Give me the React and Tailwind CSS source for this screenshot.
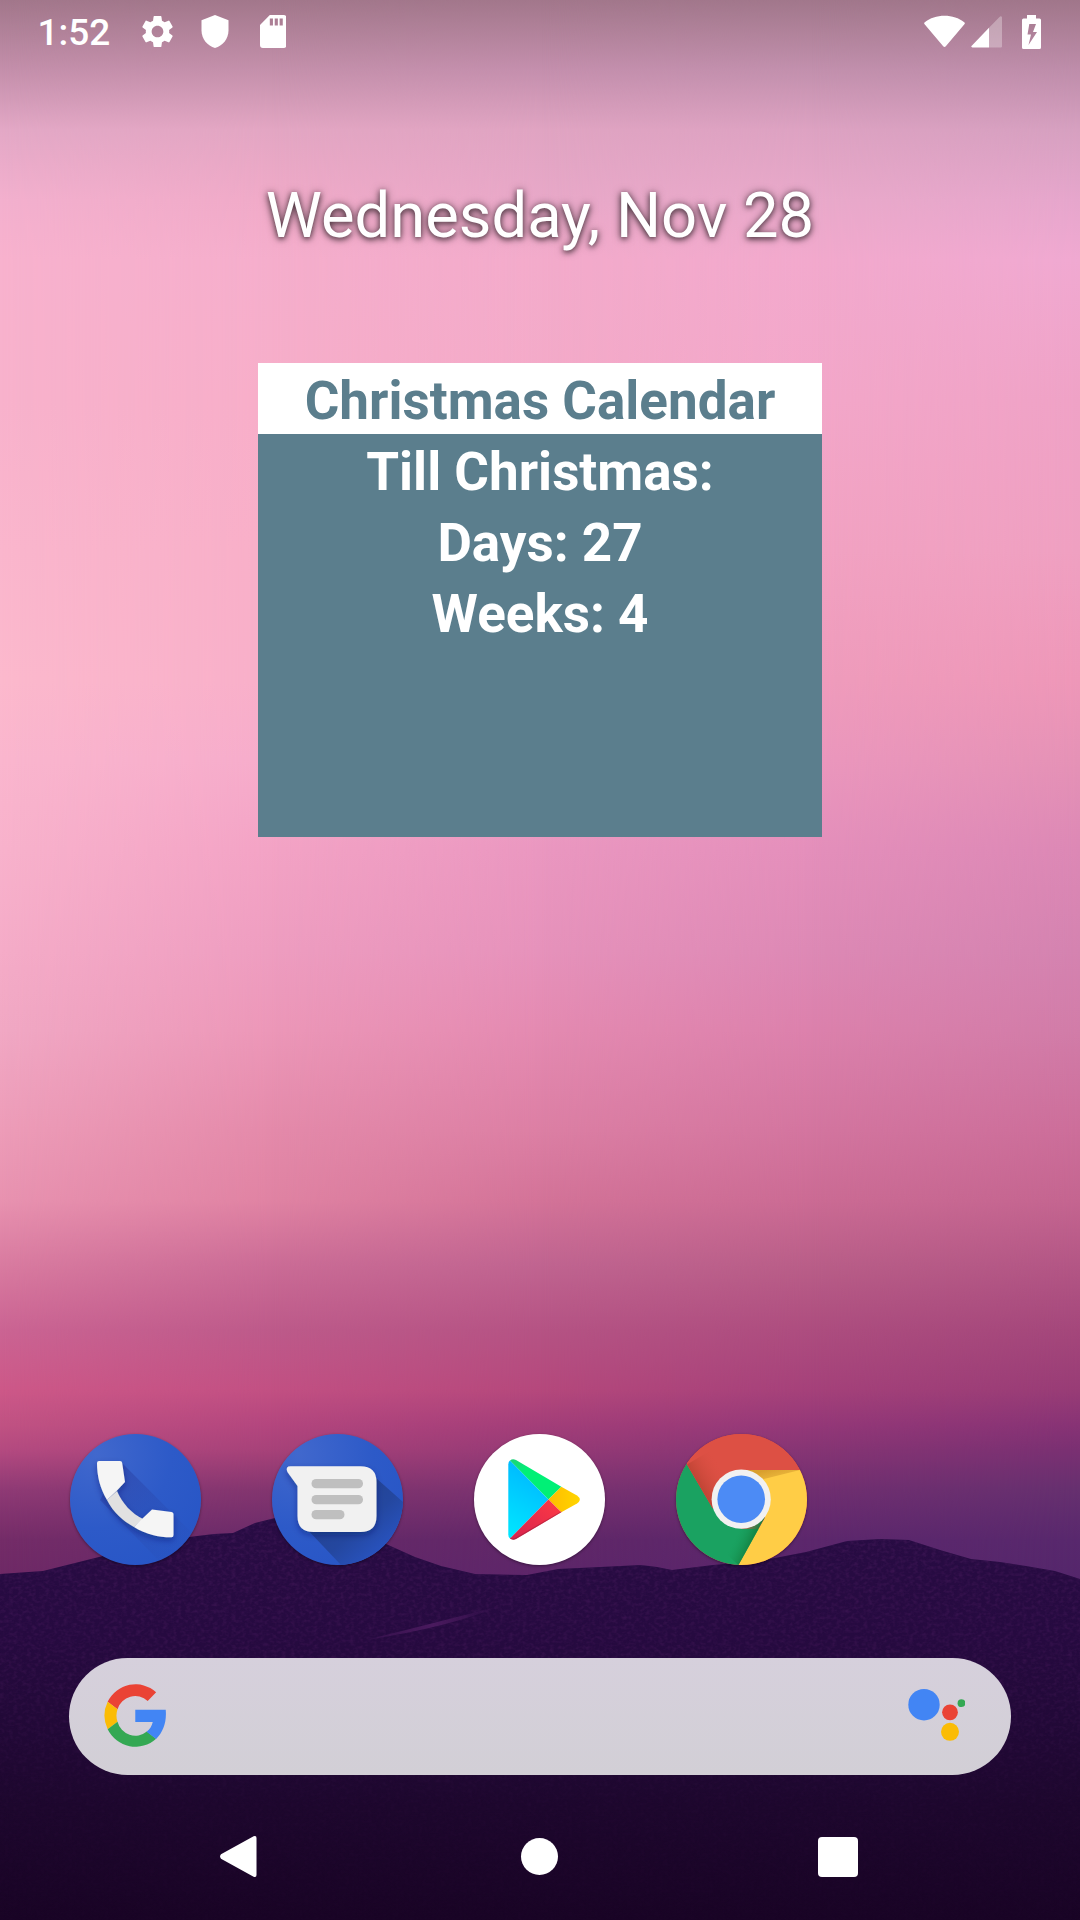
import React from "react";

// Sky colours sampled on a grid: each row is [y, colour at x = 0, 270, 540, 810, 1080].
const SKY = [
  [0, "#a2778b", "#a2778b", "#a2778b", "#a1778b", "#a0768a"],
  [70, "#c48fab", "#c490ab", "#c48fad", "#c290ad", "#be8daa"],
  [130, "#e3a8c6", "#e3a6c3", "#e0a4c2", "#dda2c2", "#d6a0c0"],
  [200, "#f3b0ce", "#f0aac8", "#e8a8c8", "#e9a9ca", "#e6a6cc"],
  [260, "#f8b2ce", "#f5aecc", "#f3abcb", "#f2a9cd", "#f0a9d1"],
  [400, "#f8b2cc", "#f7aec9", "#f4aac8", "#f3a7c9", "#efa2c6"],
  [550, "#fab6cd", "#f8afc8", "#f5aac6", "#f2a2c2", "#efa0c1"],
  [680, "#fcb9cd", "#f8afc9", "#f2a5c5", "#ef9cbc", "#ee97b8"],
  [760, "#fab6ce", "#f6accb", "#f0a2c5", "#eb97bd", "#e592b6"],
  [850, "#f8b2cc", "#f3a3c5", "#ea97c0", "#e48fbb", "#dc88b5"],
  [950, "#f5acc8", "#ee9dc0", "#e692bb", "#dd89b5", "#d483b0"],
  [1030, "#f1a8c4", "#ec97b8", "#e48ab1", "#dc81ac", "#d17ca8"],
  [1130, "#ed9cb8", "#e48aaa", "#dc7fa4", "#d3759f", "#cc6e9a"],
  [1200, "#e892b0", "#e083a3", "#d37398", "#cb6b94", "#c46590"],
  [1265, "#d97ba0", "#cb6c96", "#c06490", "#b95e88", "#b35685"],
  [1330, "#cb6493", "#bd5a8a", "#b55384", "#ad4d7f", "#a4477b"],
  [1390, "#cd5888", "#c25083", "#b5487c", "#a5417a", "#983c76"],
  [1425, "#c05283", "#b3467e", "#a33e79", "#943878", "#873375"],
  [1450, "#b44a80", "#a74279", "#963a76", "#863574", "#7a3072"],
  [1490, "#8f3a75", "#83356f", "#7a3270", "#702e70", "#66306f"],
  [1540, "#742c68", "#682a69", "#602768", "#5c276c", "#58286d"],
  [1600, "#6a2764", "#62276a", "#5b256a", "#58256b", "#52266a"],
];
const COLS = [0, 1, 2, 3, 4];

const HILL =
  "M0 1574L43 1571L75 1563L103 1556L150 1547L189 1537L214 1534L233 1533L255 1523L275 1518L310 1516L345 1524L386 1544L415 1557L441 1566L475 1574L527 1575L558 1569L600 1567L641 1565L657 1567L672 1570L713 1565L760 1561L806 1552L847 1541L880 1539L909 1540L940 1550L971 1559L1000 1562L1026 1566L1055 1571L1080 1579V1920H0Z";

function Wallpaper() {
  return (
    <svg className="absolute inset-0" width="1080" height="1920" viewBox="0 0 1080 1920" aria-hidden="true">
      <defs>
        {COLS.map((c) => (
          <linearGradient key={c} id={`sky${c}`} gradientUnits="userSpaceOnUse" x1="0" y1="0" x2="0" y2="1920">
            {SKY.map((row) => (
              <stop key={row[0]} offset={row[0] / 1920} stopColor={row[c + 1]} />
            ))}
          </linearGradient>
        ))}
        {COLS.slice(1).map((c) => (
          <React.Fragment key={c}>
            <linearGradient id={`fade${c}`} gradientUnits="userSpaceOnUse" x1={(c - 1) * 270} y1="0" x2={c * 270} y2="0">
              <stop offset="0" stopColor="#fff" stopOpacity="0" />
              <stop offset="1" stopColor="#fff" />
            </linearGradient>
            <mask id={`mask${c}`} maskUnits="userSpaceOnUse" x="0" y="0" width="1080" height="1920">
              <rect width="1080" height="1920" fill={`url(#fade${c})`} />
            </mask>
          </React.Fragment>
        ))}
        <linearGradient id="hill" gradientUnits="userSpaceOnUse" x1="0" y1="1515" x2="0" y2="1920">
          <stop offset="0" stopColor="#280c44" />
          <stop offset="0.3" stopColor="#260a40" />
          <stop offset="0.5" stopColor="#220938" />
          <stop offset="0.72" stopColor="#1d072d" />
          <stop offset="1" stopColor="#190425" />
        </linearGradient>
        <linearGradient id="grainFade" gradientUnits="userSpaceOnUse" x1="0" y1="1515" x2="0" y2="1920">
          <stop offset="0" stopColor="#fff" stopOpacity="0.5" />
          <stop offset="0.4" stopColor="#fff" stopOpacity="0.35" />
          <stop offset="0.7" stopColor="#fff" stopOpacity="0.1" />
          <stop offset="1" stopColor="#fff" stopOpacity="0.04" />
        </linearGradient>
        <clipPath id="hillClip">
          <path d={HILL} />
        </clipPath>
        <mask id="grainMask" maskUnits="userSpaceOnUse" x="0" y="1500" width="1080" height="420">
          <rect y="1500" width="1080" height="420" fill="url(#grainFade)" />
        </mask>
        <filter id="grain" x="0" y="0" width="1" height="1" colorInterpolationFilters="sRGB">
          <feTurbulence type="fractalNoise" baseFrequency="0.22 0.3" numOctaves="2" seed="4" />
          <feColorMatrix values="0 0 0 0 0.36  0 0 0 0 0.14  0 0 0 0 0.42  1.6 0 0 0 -0.66" />
        </filter>
        <linearGradient id="streak" x1="0" y1="0" x2="1" y2="0">
          <stop offset="0" stopColor="#4a1a5e" stopOpacity="0.3" />
          <stop offset="0.5" stopColor="#4a1a5e" />
          <stop offset="1" stopColor="#4a1a5e" stopOpacity="0" />
        </linearGradient>
      </defs>
      <rect width="1080" height="1600" fill="url(#sky0)" />
      {COLS.slice(1).map((c) => (
        <rect key={c} width="1080" height="1600" fill={`url(#sky${c})`} mask={`url(#mask${c})`} />
      ))}
      <path d={HILL} fill="url(#hill)" />
      <g clipPath="url(#hillClip)" mask="url(#grainMask)">
        <rect y="1500" width="1080" height="420" filter="url(#grain)" />
      </g>
      <path d="M366 1640Q430 1624 500 1606Q450 1627 366 1640Z" fill="url(#streak)" />
    </svg>
  );
}

function StatusBar() {
  return (
    <header className="flex h-[63px] items-center justify-between pr-[39px] pl-[37.500px] text-white">
      <div className="flex items-center">
        <span className="w-[99px] pt-[3px] text-[37px] leading-[42px] font-medium">1:52</span>
        <svg className="ml-[1px]" width="39" height="39" viewBox="0 0 24 24" fill="currentColor">
          <path d="M19.14 12.94c.04-.3.06-.61.06-.94 0-.32-.02-.64-.07-.94l2.03-1.58a.49.49 0 0 0 .12-.61l-1.92-3.32a.488.488 0 0 0-.59-.22l-2.39.96c-.5-.38-1.03-.7-1.62-.94l-.36-2.54a.484.484 0 0 0-.48-.41h-3.84c-.24 0-.43.17-.47.41l-.36 2.54c-.59.24-1.13.57-1.62.94l-2.39-.96c-.22-.08-.47 0-.59.22L2.74 8.87c-.12.21-.08.47.12.61l2.03 1.58c-.05.3-.09.63-.09.94s.02.64.07.94l-2.03 1.58a.49.49 0 0 0-.12.61l1.92 3.32c.12.22.37.29.59.22l2.39-.96c.5.38 1.03.7 1.62.94l.36 2.54c.05.24.24.41.48.41h3.84c.24 0 .44-.17.47-.41l.36-2.54c.59-.24 1.13-.56 1.62-.94l2.39.96c.22.08.47 0 .59-.22l1.92-3.32c.12-.22.07-.47-.12-.61l-2.01-1.58zM12 15.6c-1.98 0-3.6-1.62-3.6-3.6s1.62-3.6 3.6-3.6 3.6 1.62 3.6 3.6-1.62 3.6-3.6 3.6z" />
        </svg>
        <svg className="ml-[24.500px]" width="28" height="33" viewBox="0 0 28 33" fill="currentColor">
          <path d="M14 0 27.500 5.200V15.500C27.500 24 21.500 31 14 33 6.500 31 .5 24 .5 15.500V5.200Z" />
        </svg>
        <svg className="ml-[30.500px]" width="26.500" height="33" viewBox="0 0 27 33" preserveAspectRatio="none" fill="currentColor" fillRule="evenodd">
          <path d="M10 0H24A3 3 0 0 1 27 3V30A3 3 0 0 1 24 33H3A3 3 0 0 1 0 30V10ZM10 3.500V10.500H13.200V3.500ZM15 3.500V10.500H18.200V3.500ZM20 3.500V10.500H23.200V3.500Z" />
        </svg>
      </div>
      <div className="flex items-center">
        <svg width="41" height="33" viewBox="0 0 41 33" fill="currentColor">
          <path d="M.8 9.500A1.500 1.500 0 0 1 .8 7.200C6 3 13 .8 20.500 .8S35 3 40.200 7.200A1.500 1.500 0 0 1 40.200 9.500L21.800 31.200A1.700 1.700 0 0 1 19.200 31.200Z" />
        </svg>
        <svg className="ml-[6px]" width="31" height="32" viewBox="0 0 31 32" fill="currentColor">
          <path d="M18 11.800L28.500.9C29.600-.2 31 .4 31 1.800V29.500A1.500 1.500 0 0 1 29.500 31.500H18Z" opacity="0.3" />
          <path d="M18 11.800V31.500H1.500C.2 31.500-.2 30.400 1 29.500Z" />
        </svg>
        <svg className="ml-[20px]" width="19" height="34" viewBox="0 0 19 34" fill="currentColor" fillRule="evenodd">
          <path d="M5 0H14V3.500H17.500A1.500 1.500 0 0 1 19 5V32.500A1.500 1.500 0 0 1 17.500 34H1.500A1.500 1.500 0 0 1 0 32.500V5A1.500 1.500 0 0 1 1.500 3.500H5ZM7.300 9L5.500 19.500H9L6.500 30L15 17H11L14 9Z" />
        </svg>
      </div>
    </header>
  );
}

function PhoneIcon() {
  return (
    <svg width="131" height="131" viewBox="0 0 131 131">
      <defs>
        <radialGradient id="phoneBg" cx="0.2" cy="0.15" r="0.95">
          <stop offset="0" stopColor="#4168cd" />
          <stop offset="0.6" stopColor="#2d5ac8" />
          <stop offset="1" stopColor="#2856c6" />
        </radialGradient>
        <linearGradient id="phoneSh" x1="0.1" y1="0.1" x2="0.8" y2="0.8">
          <stop offset="0" stopColor="#2a3ea0" stopOpacity="0.55" />
          <stop offset="1" stopColor="#2a4cb0" stopOpacity="0.12" />
        </linearGradient>
        <clipPath id="phoneClip"><circle cx="65.500" cy="65.500" r="65.500" /></clipPath>
        <filter id="soft" x="-20%" y="-20%" width="140%" height="140%">
          <feDropShadow dx="0" dy="3" stdDeviation="3" floodColor="#0a1f60" floodOpacity="0.4" />
        </filter>
      </defs>
      <circle cx="65.500" cy="65.500" r="65.500" fill="url(#phoneBg)" />
      <path clipPath="url(#phoneClip)" d="M51 28L131 108V131H93L30 66Z" fill="url(#phoneSh)" />
      <g filter="url(#soft)">
        <path d="M47 57C52 69 62 80 73 85L64 93C53 87 43 78 37 66Z" fill="#e1e1e1" />
        <path d="M29 27H50Q52 27 52.200 29L55 48L46.500 57L37 66C30 54 27 42 27 29Q27 27 29 27Z" fill="#f5f5f5" />
        <path d="M64 93L73 84L82 75.500L101.500 78Q103.500 78.300 103.500 80V101Q103.500 103.300 101.500 103.300C88 103.300 75 100 64 93Z" fill="#f5f5f5" />
      </g>
    </svg>
  );
}

function MessagesIcon() {
  return (
    <svg width="131" height="131" viewBox="0 0 131 131">
      <defs>
        <linearGradient id="msgSh" x1="0.2" y1="0.2" x2="0.8" y2="0.8">
          <stop offset="0" stopColor="#23428f" />
          <stop offset="0.6" stopColor="#24479f" />
          <stop offset="1" stopColor="#2852bd" />
        </linearGradient>
      </defs>
      <circle cx="65.500" cy="65.500" r="65.500" fill="url(#phoneBg)" />
      <path clipPath="url(#phoneClip)" d="M32 92L104 44L131 68V131H69Z" fill="url(#msgSh)" />
      <g filter="url(#soft)">
        <path d="M18.500 32.200H88.500Q104.500 32.200 104.500 48.200V82Q104.500 98 88.500 98H41.500Q25.500 98 25.500 82V52L15.400 38Q13 32.200 18.500 32.200Z" fill="#f1f1f1" />
      </g>
      <g fill="#bfbfbf">
        <rect x="39.500" y="45" width="51.500" height="9.300" rx="4.600" />
        <rect x="39.500" y="61" width="51.500" height="9.300" rx="4.600" />
        <rect x="39.500" y="76" width="33" height="9.300" rx="4.600" />
      </g>
    </svg>
  );
}

function PlayIcon() {
  return (
    <svg width="131" height="131" viewBox="0 0 131 131">
      <defs>
        <linearGradient id="playBlue" x1="0.6" y1="0" x2="0.3" y2="1">
          <stop offset="0" stopColor="#00b4ff" />
          <stop offset="1" stopColor="#00e5ff" />
        </linearGradient>
        <linearGradient id="playGreen" x1="0" y1="0" x2="0.6" y2="0.6">
          <stop offset="0" stopColor="#1fd07a" />
          <stop offset="0.5" stopColor="#00f076" />
        </linearGradient>
        <linearGradient id="playRed" x1="1" y1="0" x2="0" y2="1">
          <stop offset="0" stopColor="#ff3a44" />
          <stop offset="1" stopColor="#d6224f" />
        </linearGradient>
        <linearGradient id="playYellow" x1="1" y1="0" x2="0" y2="0">
          <stop offset="0" stopColor="#ffd500" />
          <stop offset="1" stopColor="#ffbc00" />
        </linearGradient>
      </defs>
      <circle cx="65.500" cy="65.500" r="65.500" fill="#fff" />
      <path d="M36 26.500L74.500 65.500L36 104.500Q34.300 103.500 34.300 100.500V30.500Q34.300 27.500 36 26.500Z" fill="url(#playBlue)" />
      <path d="M36 26.500Q38.500 24.300 42 26L87.300 52.700L74.500 65.500Z" fill="url(#playGreen)" />
      <path d="M87.300 52.700L103 61.500Q108.500 65.500 103 69.500L87.300 78.300L74.500 65.500Z" fill="url(#playYellow)" />
      <path d="M36 104.500Q38.500 106.500 42 105L87.300 78.300L74.500 65.500Z" fill="url(#playRed)" />
      <path d="M36 103.500Q38.500 105.500 42 103.500L87.300 77.300V78.300L42 105Q38.500 106.500 36 104.500Z" fill="#a51f3c" opacity="0.6" />
    </svg>
  );
}

function ChromeIcon() {
  return (
    <svg width="131" height="131" viewBox="0 0 131 131">
      <defs>
        <linearGradient id="chRed" gradientUnits="userSpaceOnUse" x1="24" y1="56" x2="50" y2="40">
          <stop offset="0" stopColor="#b5402f" stopOpacity="0.8" />
          <stop offset="1" stopColor="#dd5044" stopOpacity="0" />
        </linearGradient>
        <linearGradient id="chYellow" gradientUnits="userSpaceOnUse" x1="95" y1="35" x2="99" y2="50">
          <stop offset="0" stopColor="#d49a2c" stopOpacity="0.9" />
          <stop offset="1" stopColor="#e8b43a" stopOpacity="0.6" />
        </linearGradient>
        <linearGradient id="chGreen" gradientUnits="userSpaceOnUse" x1="77" y1="108" x2="60" y2="100">
          <stop offset="0" stopColor="#138040" />
          <stop offset="1" stopColor="#18a05e" stopOpacity="0" />
        </linearGradient>
      </defs>
      <g clipPath="url(#phoneClip)">
        <rect width="131" height="131" fill="#dd5044" />
        <path d="M11 30.500L36.500 74L66 95H88L62 131H0V0Z" fill="#1aa261" />
        <path d="M65 36H131V131H62.500L89 83.500Z" fill="#ffcd46" />
        <path d="M65 36H124L86 45.500Z" fill="url(#chYellow)" />
        <path d="M62.500 131L89 83L64 95L50 120Z" fill="url(#chGreen)" />
        <path d="M11 30.500V0H131V36H65L36.500 74Z" fill="#dd5044" />
        <path d="M11 30.500L36.500 74L52 40L42 12Z" fill="url(#chRed)" />
      </g>
      <circle cx="65.200" cy="65.200" r="29.600" fill="#f1f1f1" />
      <circle cx="65.200" cy="65.200" r="23.800" fill="#4c8bf5" />
    </svg>
  );
}

function Dock() {
  const apps = [PhoneIcon, MessagesIcon, PlayIcon, ChromeIcon];
  return (
    <nav className="mt-[597px] flex gap-[71px] pl-[70px]">
      {apps.map((Icon, i) => (
        <div key={i} className="size-[131px] rounded-full shadow-[0_1px_3px_rgba(0,0,0,0.4)]">
          <Icon />
        </div>
      ))}
    </nav>
  );
}

function SearchBar() {
  return (
    <div className="mx-[69px] mt-[93px] flex h-[117px] items-center justify-between rounded-full bg-linear-to-b from-[#d6d0dc] to-[#d2cfd6] pr-[46px] pb-[3px] pl-[35px]">
      <svg width="62" height="63" viewBox="1 1 22 22" preserveAspectRatio="none">
        <path fill="#ea4335" d="M2.300 7.200A11 11 0 0 1 19.500 3.900L16.500 6.900A6.600 6.600 0 0 0 5.800 9.800Z" />
        <path fill="#fbbc05" d="M2.300 7.200A11 11 0 0 0 2.300 16.800L5.800 14.200A6.600 6.600 0 0 1 5.800 9.800Z" />
        <path fill="#34a853" d="M2.300 16.800A11 11 0 0 0 19.500 20.100L16.200 17.600A6.500 6.500 0 0 1 5.800 14.200Z" />
        <path fill="#4285f4" d="M12.100 10H22.900C23.300 14.300 22 17.800 19.500 20.200L16.100 17.700C17.300 16.800 18 15.700 18.300 14.300H12.100Z" />
      </svg>
      <svg width="57" height="52" viewBox="908 1689 57 52">
        <circle cx="924" cy="1704.700" r="15.700" fill="#4285f4" />
        <circle cx="950" cy="1712.300" r="7.900" fill="#ea4335" />
        <circle cx="950" cy="1731.800" r="9" fill="#fbbc05" />
        <circle cx="961.500" cy="1703.200" r="3.900" fill="#34a853" />
      </svg>
    </div>
  );
}

function NavBar() {
  return (
    <nav className="mt-[60px] flex items-center justify-between pr-[222px] pl-[220px] text-white">
      <svg width="37" height="43" viewBox="0 0 38 43" fill="currentColor">
        <path d="M1 19.300 34.500 .8Q37.500-.2 37.500 2.500V40.500Q37.500 43.200 34.500 42.200L1 23.700Q-.8 21.500 1 19.300Z" />
      </svg>
      <div className="ml-[3px] size-[37px] rounded-full bg-white" />
      <div className="size-10 rounded-[4px] bg-white" />
    </nav>
  );
}

export default function App() {
  return (
    <div className="relative h-[1920px] w-[1080px] overflow-hidden font-['Roboto',sans-serif]">
      <Wallpaper />
      <div className="relative flex h-full flex-col">
        <StatusBar />
        <h1 className="mt-[115px] text-center text-[63.300px] leading-[74px] text-white [text-shadow:0_1px_9px_rgba(0,0,0,0.6),0_2px_5px_rgba(0,0,0,0.45)]">
          Wednesday, Nov 28
        </h1>
        <section className="mx-[258px] mt-[111px] h-[474px] bg-[#5b7e8d] text-center text-[53px] leading-[65px] font-bold text-white">
          <h2 className="bg-white pt-1.5 text-[#5b7e8d]">Christmas Calendar</h2>
          <p className="pt-1.5">Till Christmas:</p>
          <p className="pt-1.5">Days: 27</p>
          <p className="pt-1.5">Weeks: 4</p>
        </section>
        <Dock />
        <SearchBar />
        <NavBar />
      </div>
    </div>
  );
}
